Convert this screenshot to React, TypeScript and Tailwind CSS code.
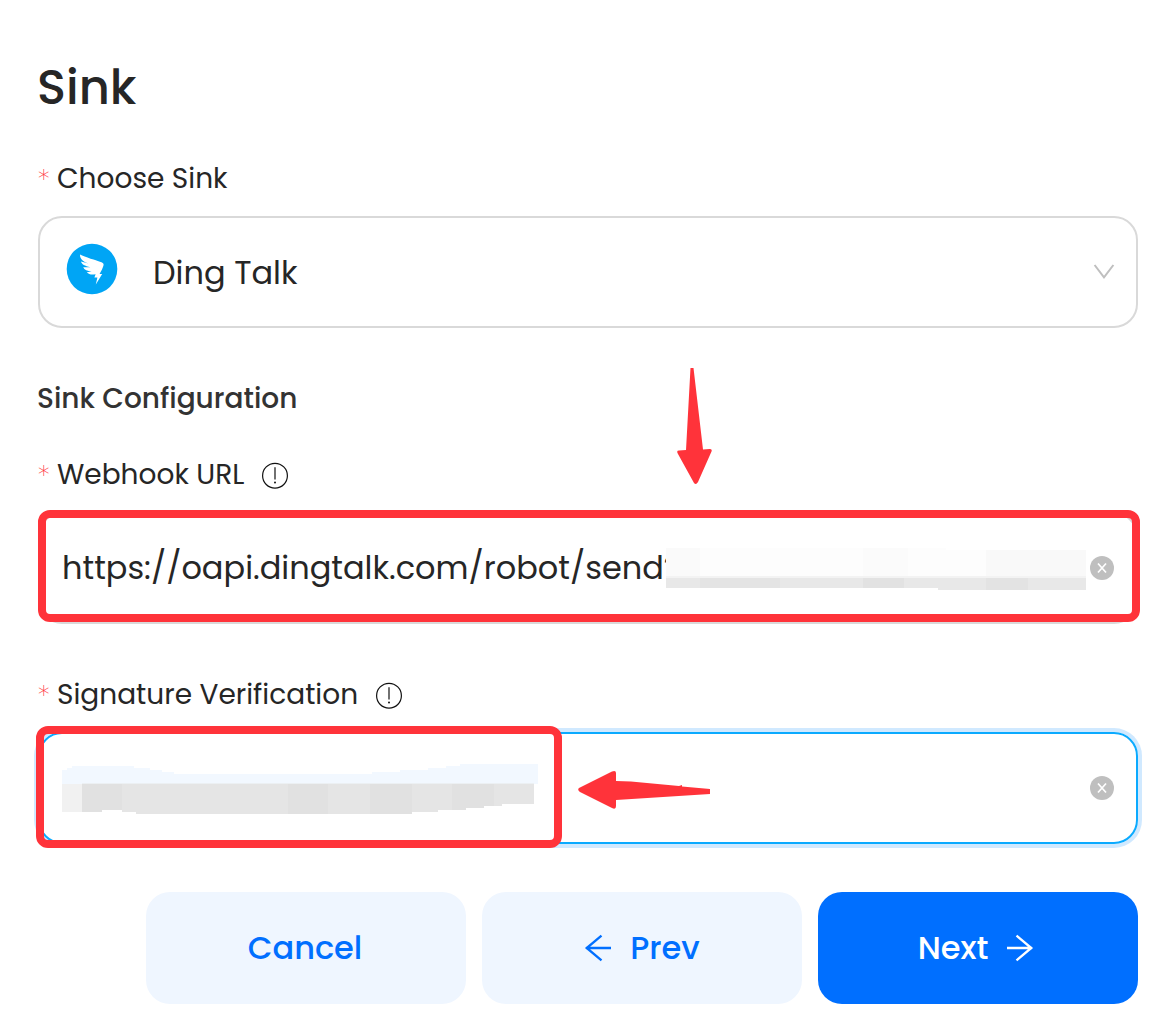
import type { ReactNode } from "react";

function Star() {
  return <span className="relative top-[2px] -left-px w-[19px] font-['Inter'] text-[27px] font-thin text-[#ff3b3f]">*</span>;
}

function Label({ children, info }: { children: ReactNode; info?: boolean }) {
  return (
    <div className="flex h-11 items-center text-[28px] leading-[44px] text-[#262626]">
      <Star />
      <span className="relative top-px">{children}</span>
      {info && (
        <svg className="relative top-[2px] ml-[17px] size-7" viewBox="0 0 28 28" fill="none" stroke="#111">
          <circle cx="14" cy="13.700" r="12.400" strokeWidth="1.200" />
          <path d="M14 5.200V17.600" strokeWidth="1.200" />
          <circle cx="14" cy="20.600" r="1" fill="#111" stroke="none" />
        </svg>
      )}
    </div>
  );
}

function Clear() {
  return (
    <svg className="size-6" viewBox="0 0 24 24">
      <circle cx="12" cy="12" r="12" fill="#bfbfbf" />
      <path d="M8 7.500L16 16.500M16 7.500L8 16.500" stroke="#fff" strokeWidth="1.700" />
    </svg>
  );
}

function Arrow({ flip }: { flip?: boolean }) {
  return (
    <svg className={flip ? "size-8 rotate-180" : "size-8"} viewBox="0 0 32 32" fill="none" stroke="currentColor" strokeWidth="2.300">
      <path d="M3 16H28M12.500 3.600L27.300 16L12.500 28.400" />
    </svg>
  );
}

export default function App() {
  return (
    <main className="flex h-[1028px] w-[1160px] flex-col overflow-hidden bg-white pr-[22px] pl-[38px] font-['Poppins','Inter',sans-serif] text-[#262626]">
      <h1 className="mt-[52px] -ml-px h-[72px] text-[48px] leading-[72px] font-medium">Sink</h1>

      <div className="mt-8">
        <Label>Choose Sink</Label>
      </div>
      <div className="mt-4 flex h-28 items-center rounded-[24px] border-2 border-[#d9d9d9] pr-[21px] pl-[26px]">
        <svg className="relative -top-[3px] size-[52px]" viewBox="0 0 52 52">
          <circle cx="26" cy="26" r="25.300" fill="#00a5f5" />
          <path fill="#fff" d="M14 11.400C19 14.200 30 17 35.500 19.200C37.500 20 38 21 37.400 22.800C36.800 25 35.200 28.200 33.600 31H36.200L29.800 41.600L31.400 34.600H28.400L29.600 31.200C26 32 23 31.700 20.800 29.200L25.600 28.400C21.400 28.200 18.200 26.600 17.200 24.200L24.400 24.200C18.800 23.200 15.600 21.200 15 18.600L22.500 20.600C17 18.400 13.800 16 14 11.400Z" />
        </svg>
        <span className="relative top-px ml-[35px] text-[32px]">Ding Talk</span>
        <svg className="ml-auto h-4 w-[22px]" viewBox="0 0 22 16" fill="none" stroke="#bfbfbf" strokeWidth="2">
          <path d="M1.600 1L11 13.400L20.400 1" />
        </svg>
      </div>

      <h2 className="mt-[50px] -ml-px h-[42px] text-[28px] leading-[42px] font-medium text-[#333]">Sink Configuration</h2>

      <div className="mt-8">
        <Label info>Webhook URL</Label>
      </div>
      <div className="relative mt-4 flex h-28 items-center rounded-[24px] border-2 border-[#d9d9d9] pr-[22px] pl-[22px]">
        <span className="w-[604px] text-[32px] whitespace-nowrap">https://oapi.dingtalk.com/robot/send?</span>
        <svg className="relative top-px h-[42px] w-[420px]" viewBox="0 0 420 42" shapeRendering="crispEdges">
          <rect width="420" height="30" fill="#fdfdfd" />
          <rect width="34" height="29" fill="#fafafa" />
          <rect x="280" width="140" height="2" fill="#fff" />
          <rect x="197" width="45" height="29" fill="#fbfbfb" />
          <rect x="320" y="2" width="100" height="28" fill="#f9f9f9" />
          <rect y="28" width="420" height="2" fill="#f3f3f3" />
          <rect y="30" width="420" height="10" fill="#e8e8e8" />
          <rect x="34" y="30" width="80" height="10" fill="#e4e4e4" />
          <rect x="197" y="30" width="41" height="10" fill="#e2e2e2" />
          <rect x="272" y="30" width="148" height="12" fill="#e8e8e8" />
          <rect x="320" y="30" width="42" height="12" fill="#e3e3e3" />
        </svg>
        <span className="ml-auto"><Clear /></span>
        <div className="absolute -top-1 -left-0.5 h-28 w-[1102px] rounded-[12px] border-8 border-[#ff333a]" />
        <svg className="absolute top-[-146px] left-[637px] h-[118px] w-9" viewBox="0 0 36 118" fill="#ff333a">
          <path d="M13.500 0H16.500L26 81.500L32.500 81Q35.500 81 34.500 83.500L21 114Q19 117.500 17 115L1 86Q-1 82.500 2 82.500L9 82Z" />
        </svg>
      </div>

      <div className="mt-12">
        <Label info>Signature Verification</Label>
      </div>
      <div className="relative mt-4 flex h-28 items-center rounded-[24px] border-2 border-[#0aaaff] pr-[22px] pl-[22px] shadow-[0_0_0_4px_#d0e9ff]">
        <svg className="relative top-px h-[50px] w-[476px]" viewBox="0 0 476 50" shapeRendering="crispEdges">
          <path fill="#f2f8ff" d="M0 6H5V4H10V2H72V4H88V6H100V8H112V10H310V8H338V6H366V4H384V2H398V0H476V20H0Z" />
          <path fill="#e5e5e5" d="M20 20H472V40H440V42H422V44H404V46H376V48H350V50H74V48H60V46H40V48H20Z" />
          <path fill="#f1f1f1" d="M0 20H20V48H0Z" />
          <path fill="#e1e1e1" d="M20 20H60V46H40V48H20ZM226 20H266V50H226ZM308 20H350V50H308ZM390 20H432V42H422V44H404V46H390Z" />
          <path fill="#ecf0f3" d="M20 19H472V20H20Z" />
        </svg>
        <span className="ml-auto"><Clear /></span>
        <div className="absolute -top-2 -left-1 h-[122px] w-[526px] rounded-[12px] border-8 border-[#ff333a]" />
        <svg className="absolute top-[36px] left-[538px] h-10 w-[134px]" viewBox="0 0 134 40" fill="#ff333a">
          <path d="M1 18L34 1.500Q38 0 38 3V11L53 11.500L101 16L104 15V16.500L132 19V24L38 30V36Q38 40 34 38L2 22Q-1 20 1 18Z" />
        </svg>
      </div>

      <div className="mt-12 flex justify-end gap-4 text-[32px] font-medium">
        <button className="h-28 w-80 rounded-[24px] bg-[#eff6ff] pr-0.5 text-[#006fff]">Cancel</button>
        <button className="flex h-28 w-80 items-center justify-center gap-4 rounded-[24px] bg-[#eff6ff] pr-0.5 text-[#006fff]">
          <Arrow flip />
          <span>Prev</span>
        </button>
        <button className="flex h-28 w-80 items-center justify-center gap-4 rounded-[24px] bg-[#006fff] pr-0.5 text-white">
          <span>Next</span>
          <Arrow />
        </button>
      </div>
    </main>
  );
}
